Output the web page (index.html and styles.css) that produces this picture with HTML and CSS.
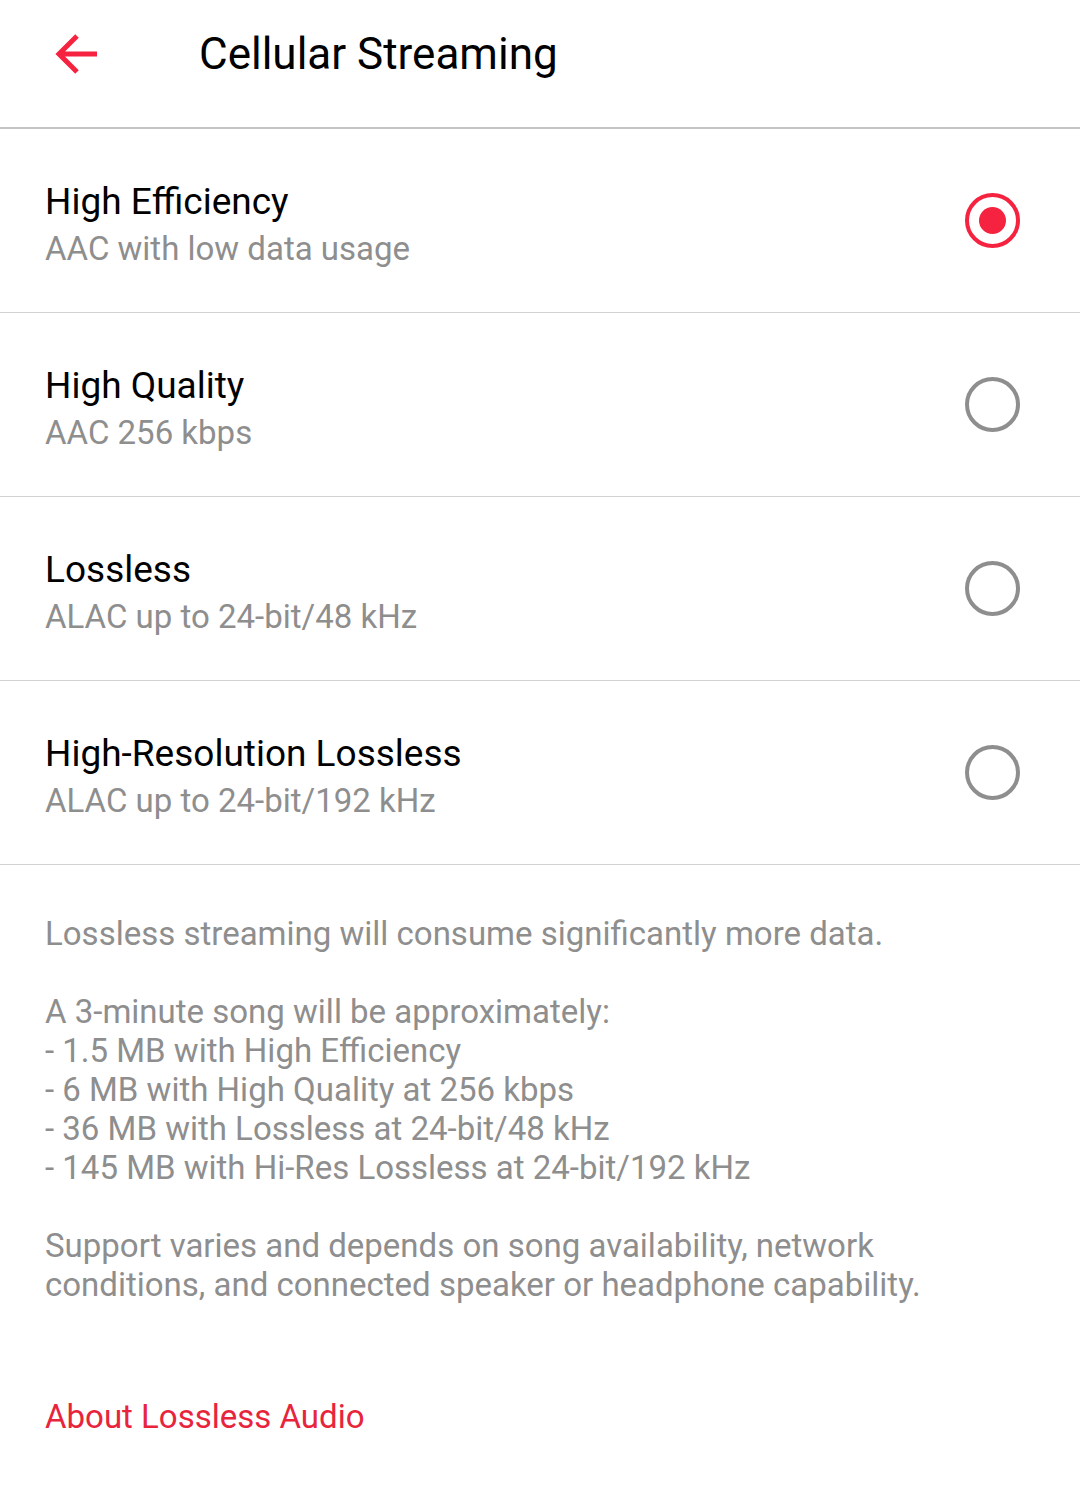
FILE: index.html
```html
<!DOCTYPE html>
<html lang="en">
<head>
    <meta charset="UTF-8">
    <meta name="viewport" content="width=device-width, initial-scale=1.0">
    <title>Cellular Streaming</title>
    <link rel="stylesheet" href="styles.css">
</head>
<body>
<div class="header">
    <div class="back">
        <svg width="48" height="48" viewBox="0 0 48 48">
            <path d="M44 24H6M24 6L6 24l18 18" fill="none" stroke="#f5233f" stroke-width="5"/>
        </svg>
    </div>
    <h1 class="title">Cellular Streaming</h1>
</div>

<div class="options">
    <div class="option">
        <div class="label">
            <div class="name">High Efficiency</div>
            <div class="desc">AAC with low data usage</div>
        </div>
        <div class="radio checked"></div>
    </div>
    <div class="option">
        <div class="label">
            <div class="name">High Quality</div>
            <div class="desc">AAC 256 kbps</div>
        </div>
        <div class="radio"></div>
    </div>
    <div class="option">
        <div class="label">
            <div class="name">Lossless</div>
            <div class="desc">ALAC up to 24-bit/48 kHz</div>
        </div>
        <div class="radio"></div>
    </div>
    <div class="option">
        <div class="label">
            <div class="name">High-Resolution Lossless</div>
            <div class="desc">ALAC up to 24-bit/192 kHz</div>
        </div>
        <div class="radio"></div>
    </div>
</div>

<div class="info">
    <p>Lossless streaming will consume significantly more data.</p>
    <p>A 3-minute song will be approximately:<br>
    - 1.5 MB with High Efficiency<br>
    - 6 MB with High Quality at 256 kbps<br>
    - 36 MB with Lossless at 24-bit/48 kHz<br>
    - 145 MB with Hi-Res Lossless at 24-bit/192 kHz</p>
    <p>Support varies and depends on song availability, network conditions, and connected speaker or headphone capability.</p>
    <a class="about" href="#">About Lossless Audio</a>
</div>
</body>
</html>
```

FILE: styles.css
```css
body {
    margin: 0;
    font-family: Roboto, "Liberation Sans", sans-serif;
    background: #fff;
    color: #000;
}

.header {
    display: flex;
    align-items: center;
    height: 107px;
    padding-bottom: 20px;
    border-bottom: 2px solid #c4c4c4;
}

.back {
    width: 48px;
    height: 48px;
    margin-left: 53px;
    margin-right: 98px;
}

.title {
    margin: 0;
    font-size: 44px;
    font-weight: 400;
}

.option {
    display: flex;
    align-items: center;
    justify-content: space-between;
    height: 183px;
    padding: 0 60px 0 45px;
    border-bottom: 1px solid #d2d2d2;
}

.label {
    padding-top: 8px;
}

.name {
    font-size: 37px;
    line-height: 47px;
}

.desc {
    font-size: 33px;
    line-height: 47px;
    color: #8e8e8e;
}

.radio {
    width: 47px;
    height: 47px;
    border: 4px solid #8e8e8e;
    border-radius: 50%;
    box-sizing: content-box;
    position: relative;
}

.radio.checked {
    border-color: #f5233f;
}

.radio.checked::after {
    content: "";
    position: absolute;
    left: 10px;
    top: 10px;
    width: 27px;
    height: 27px;
    border-radius: 50%;
    background: #f5233f;
}

.info {
    padding: 49px 60px 0 45px;
    font-size: 33px;
    line-height: 39px;
    color: #8e8e8e;
}

.info p {
    margin: 0 0 39px 0;
}

.about {
    display: block;
    margin-top: 93px;
    color: #e8243c;
    text-decoration: none;
}
```
